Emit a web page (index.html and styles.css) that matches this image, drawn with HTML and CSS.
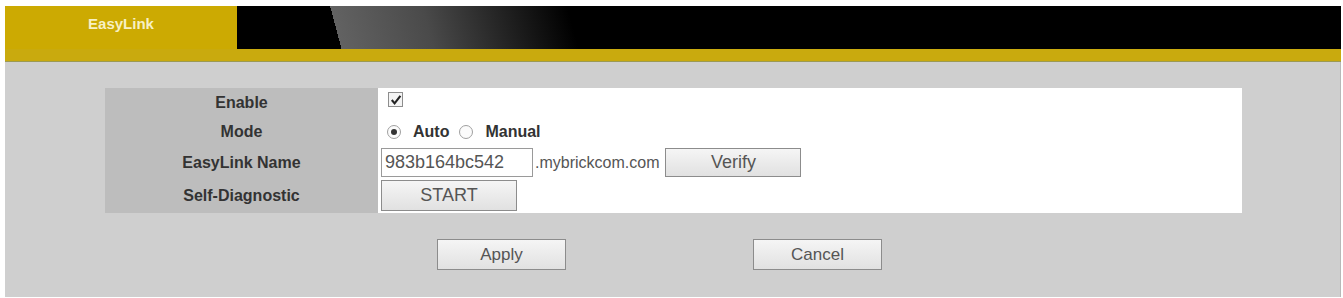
FILE: index.html
```html
<!DOCTYPE html>
<html lang="en">
<head>
	<meta charset="UTF-8">
	<title>EasyLink</title>
	<link rel="stylesheet" href="styles.css">
</head>
<body>
	<div class="page">
		<div class="header">
			<div class="tab">EasyLink</div>
			<div class="band"></div>
		</div>
		<div class="stripe"></div>
		<div class="content">
			<div class="form">
				<div class="label r1">Enable</div>
				<div class="value r1">
					<span class="check">
						<svg width="12" height="12" viewBox="0 0 12 12"><path d="M1.8 6 L4.6 9.4 L10.4 1.8" fill="none" stroke="#222" stroke-width="2.1"/></svg>
					</span>
				</div>
				<div class="label r2">Mode</div>
				<div class="value r2">
					<span class="radio on"></span><b class="opt">Auto</b>
					<span class="radio"></span><b class="opt">Manual</b>
				</div>
				<div class="label r3">EasyLink Name</div>
				<div class="value r3">
					<input class="name" type="text" value="983b164bc542">
					<span class="domain">.mybrickcom.com</span>
					<button class="btn verify">Verify</button>
				</div>
				<div class="label r4">Self-Diagnostic</div>
				<div class="value r4">
					<button class="btn start">START</button>
				</div>
			</div>
			<div class="actions">
				<button class="btn big">Apply</button>
				<button class="btn big">Cancel</button>
			</div>
		</div>
	</div>
</body>
</html>
```

FILE: styles.css
```css
body{
	margin:0;
	background:#fff;
	font-family:"Liberation Sans", Arial, sans-serif;
}
.page{
	margin:6px 2px 0 5px;
}
.header{
	display:flex;
	height:43px;
}
.tab{
	width:232px;
	background:#ccaa02;
	color:#f7f0c4;
	font-weight:bold;
	font-size:15px;
	text-align:center;
	padding-top:9px;
	box-sizing:border-box;
}
.band{
	flex:1;
	background:linear-gradient(75deg, #000 101px, #626262 101px, #4a4a4a 190px, #000 330px);
}
.stripe{
	height:12px;
	background:#c9aa0e;
	border-bottom:1px solid #9c9a52;
}
.content{
	background:#cfcfcf;
	height:235px;
	padding-top:26px;
	box-sizing:border-box;
	border-right:1px solid #b8b8b8;
}
.form{
	display:grid;
	grid-template-columns:273px 864px;
	grid-template-rows:28px 31px 31px 35px;
	margin-left:100px;
}
.label{
	background:#bdbdbd;
	color:#333;
	font-weight:bold;
	font-size:16px;
	display:flex;
	align-items:center;
	justify-content:center;
}
.label.r1{
	padding-top:2px;
}
.value{
	background:#fff;
	display:flex;
	align-items:center;
	padding-left:3px;
}
.value.r1{
	align-items:flex-start;
	padding-top:4px;
}
.check{
	display:flex;
	align-items:center;
	justify-content:center;
	width:13px;
	height:13px;
	margin-left:7px;
	border:1px solid #8d8d8d;
	background:#f4f4f4;
}
.radio{
	width:12px;
	height:12px;
	border:1px solid #a0a0a0;
	border-radius:50%;
	background:#fbfbfb;
	display:flex;
	align-items:center;
	justify-content:center;
	margin-left:6px;
}
.radio.on::after{
	content:"";
	width:6px;
	height:6px;
	border-radius:50%;
	background:#333;
}
.opt{
	font-size:16px;
	color:#333;
	margin-left:12px;
	margin-right:4px;
}
.name{
	width:152px;
	height:29px;
	box-sizing:border-box;
	border:1px solid #9a9a9a;
	font-family:"Liberation Sans", Arial, sans-serif;
	font-size:18px;
	color:#555;
	padding:0 3px;
	margin:0;
}
.domain{
	font-size:16px;
	color:#555;
	margin-left:2px;
}
.btn{
	font-family:"Liberation Sans", Arial, sans-serif;
	font-size:18px;
	color:#555;
	background:linear-gradient(#f5f5f5, #e1e1e1);
	border:1px solid #8c8c8c;
	padding:0;
	margin:0;
}
.verify{
	width:136px;
	height:29px;
	margin-left:6px;
}
.start{
	width:136px;
	height:31px;
}
.actions{
	display:flex;
	gap:187px;
	margin:26px 0 0 432px;
}
.big{
	width:129px;
	height:31px;
	font-size:17px;
}
```
